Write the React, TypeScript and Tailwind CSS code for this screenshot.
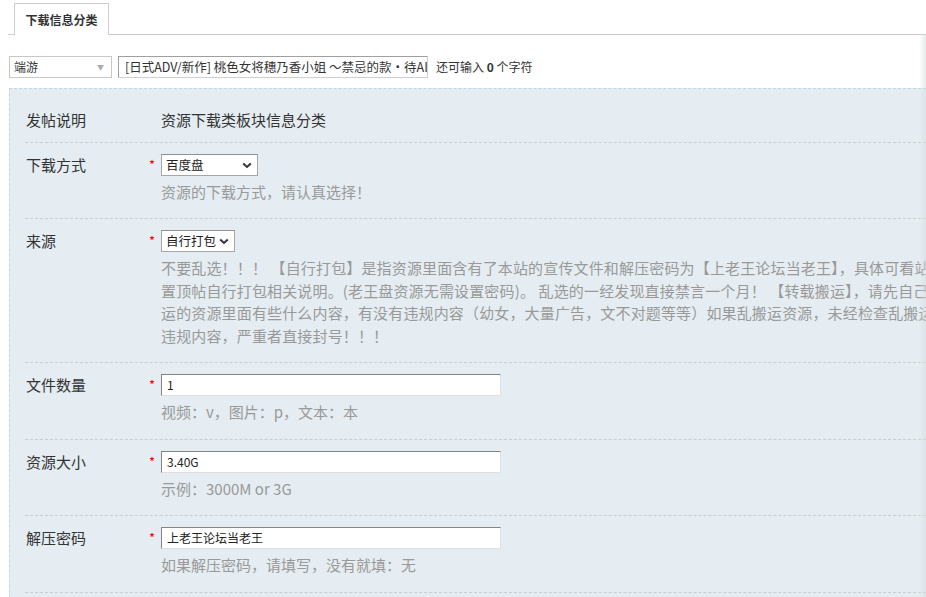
import React from "react";

function Chevron() {
  return (
    <svg width="10" height="7" viewBox="0 0 10 7" className="shrink-0">
      <polyline points="1.2,1.5 5,5 8.8,1.5" fill="none" stroke="#333" strokeWidth="2" />
    </svg>
  );
}

function FakeSelect({ value, width }: { value: string; width: string }) {
  return (
    <div
      className={`${width} h-[22px] flex items-center justify-between gap-[3px] bg-white border border-[#a6a6a6] border-t-[#8f8f8f] pl-[4px] pr-[5px] text-[12.5px] text-[#222] leading-none`}
    >
      <span className="whitespace-nowrap">{value}</span>
      <Chevron />
    </div>
  );
}

function TextBox({ value }: { value: string }) {
  return (
    <div className="w-[340px] h-[22px] flex items-center bg-white border border-[#e0e0e0] border-t-[#848484] border-l-[#848484] px-[5px] text-[12px] text-[#222] leading-none">
      {value}
    </div>
  );
}

function Row({
  label,
  required,
  children,
  pb,
}: {
  label: string;
  required?: boolean;
  children: React.ReactNode;
  pb: string;
}) {
  return (
    <div className={`flex border-b border-dashed border-[#cdcdcd] pt-[11px] ${pb}`}>
      <div className="w-[122px] shrink-0 pl-[1px] leading-[22px] text-[#333]">{label}</div>
      <div className="w-[14px] shrink-0 pl-[2px] leading-[20px]">
        {required && <span className="text-[13px] text-[#e00]">*</span>}
      </div>
      <div className="flex-1 min-w-0">{children}</div>
    </div>
  );
}

function Hint({ children }: { children: React.ReactNode }) {
  return <div className="mt-[5px] leading-[22px] text-[#999] whitespace-nowrap">{children}</div>;
}

export default function App() {
  return (
    <div className="relative w-[926px] h-[597px] overflow-hidden bg-white font-['Noto_Sans_CJK_SC',sans-serif] text-[#333]">
      {/* tabs */}
      <div className="flex items-end h-[35px] pt-[3px] ml-[8px]">
        <div className="w-[6px] h-full border-b border-[#cdcdcd]" />
        <div className="w-[95px] h-full border border-b-0 border-[#cdcdcd] bg-white flex items-center justify-center text-[12px] font-bold text-[#333]">
          下载信息分类
        </div>
        <div className="flex-1 h-full border-b border-[#cdcdcd]" />
      </div>

      {/* type + title */}
      <div className="flex items-center mt-[21px] ml-[9px] h-[22px]">
        <div className="w-[103px] h-[22px] flex items-center justify-between border border-[#c8c8c8] bg-white pl-[4px] pr-[7px] text-[12px] text-[#333]">
          <span>端游</span>
          <span className="text-[7px] text-[#aaa]">▼</span>
        </div>
        <div className="ml-[6px] w-[310px] h-[22px] flex items-center overflow-hidden whitespace-nowrap bg-white border border-[#cfcfcf] border-t-[#a0a0a0] border-l-[#a0a0a0] pl-[6px] text-[12.5px] text-[#333]">
          <span className="overflow-hidden">[日式ADV/新作] 桃色女将穗乃香小姐 ～禁忌的款・待AI</span>
        </div>
        <div className="ml-[8px] text-[12px] text-[#333]">
          还可输入 <b>0</b> 个字符
        </div>
      </div>

      {/* box */}
      <div className="mt-[10px] ml-[9px] bg-[#e5edf2] border-t border-l border-dashed border-[#c2d5e3] pt-[9px] pl-[15px] text-[15px] h-[600px]">
        <Row label="发帖说明" pb="pb-[11px]">
          <div className="leading-[22px] text-[#333]">资源下载类板块信息分类</div>
        </Row>
        <Row label="下载方式" required pb="pb-[15px]">
          <FakeSelect value="百度盘" width="w-[97px]" />
          <Hint>资源的下载方式，请认真选择！</Hint>
        </Row>
        <Row label="来源" required pb="pb-[15px]">
          <FakeSelect value="自行打包" width="w-[74px]" />
          <div className="mt-[5px] leading-[22.5px] text-[#999] whitespace-nowrap tracking-[0.15px]">
            不要乱选！！！ 【自行打包】是指资源里面含有了本站的宣传文件和解压密码为【上老王论坛当老王】，具体可看站务区
            <br />
            置顶帖自行打包相关说明。(老王盘资源无需设置密码)。 乱选的一经发现直接禁言一个月！ 【转载搬运】，请先自己检查一下搬
            <br />
            运的资源里面有些什么内容，有没有违规内容（幼女，大量广告，文不对题等等）如果乱搬运资源，未经检查乱搬运导致出现
            <br />
            违规内容，严重者直接封号！！！
          </div>
        </Row>
        <Row label="文件数量" required pb="pb-[16px]">
          <TextBox value="1" />
          <Hint>视频：v，图片：p，文本：本</Hint>
        </Row>
        <Row label="资源大小" required pb="pb-[15px]">
          <TextBox value="3.40G" />
          <Hint>示例：3000M or 3G</Hint>
        </Row>
        <Row label="解压密码" required pb="pb-[16px]">
          <TextBox value="上老王论坛当老王" />
          <Hint>如果解压密码，请填写，没有就填：无</Hint>
        </Row>
      </div>

      <div className="absolute right-0 top-[35px] bottom-0 w-[7px] bg-gradient-to-r from-transparent to-[#d8dde0]/60" />
    </div>
  );
}
